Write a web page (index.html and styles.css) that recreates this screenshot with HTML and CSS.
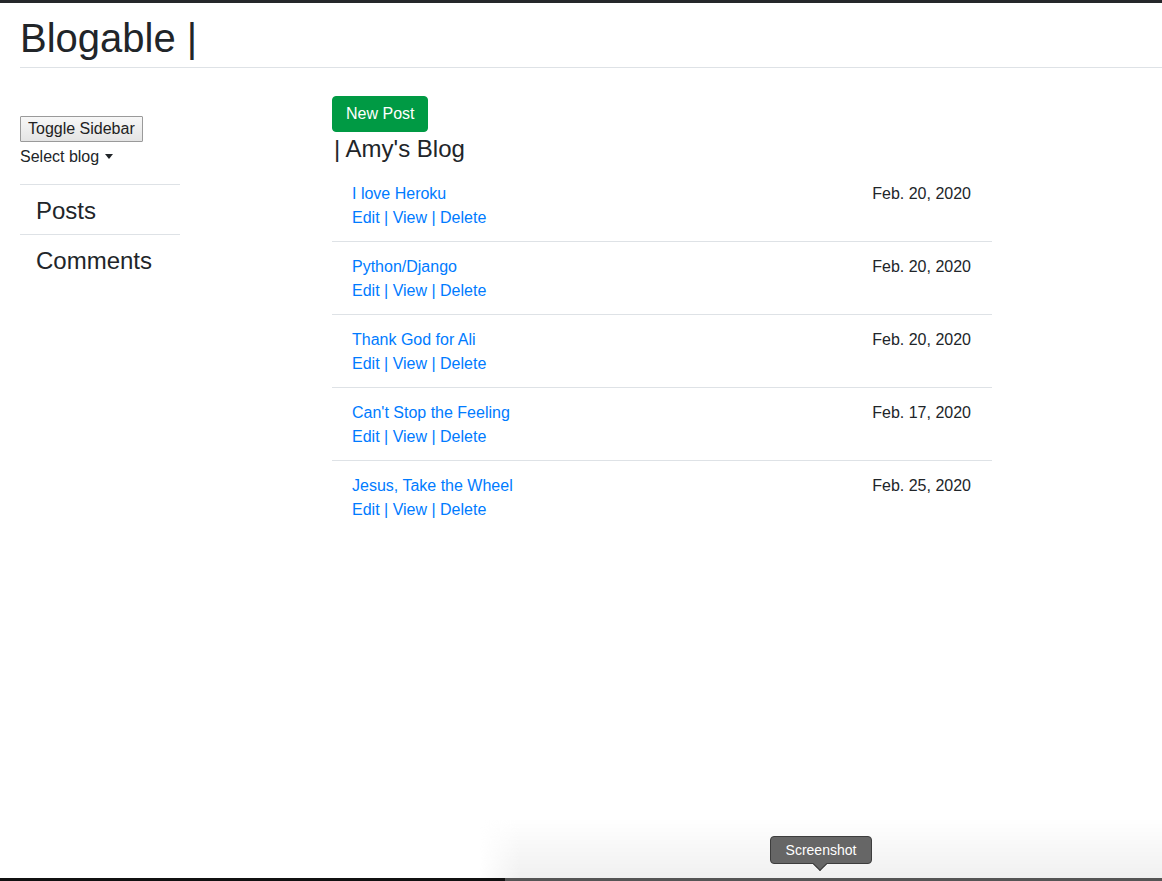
FILE: index.html
```html
<!DOCTYPE html>
<html lang="en">
<head>
<meta charset="utf-8">
<title>Blogable</title>
<link rel="stylesheet" href="styles.css">
</head>
<body>
<div class="topbar"></div>
<header class="site-header">
  <h1 class="brand">Blogable |</h1>
</header>
<div class="layout">
  <aside class="sidebar">
    <button class="toggle-btn" type="button">Toggle Sidebar</button>
    <div class="select-blog">Select blog <span class="caret"></span></div>
    <ul class="side-nav">
      <li class="side-item">Posts</li>
      <li class="side-item">Comments</li>
    </ul>
  </aside>
  <main class="main">
    <a class="btn-new" href="#">New Post</a>
    <h4 class="blog-title">| Amy's Blog</h4>
    <div class="posts">
      <div class="post-row">
        <div class="post-info">
          <a class="post-link" href="#">I love Heroku</a>
          <div class="post-actions"><a href="#">Edit</a> | <a href="#">View</a> | <a href="#">Delete</a></div>
        </div>
        <div class="post-date">Feb. 20, 2020</div>
      </div>
      <div class="post-row">
        <div class="post-info">
          <a class="post-link" href="#">Python/Django</a>
          <div class="post-actions"><a href="#">Edit</a> | <a href="#">View</a> | <a href="#">Delete</a></div>
        </div>
        <div class="post-date">Feb. 20, 2020</div>
      </div>
      <div class="post-row">
        <div class="post-info">
          <a class="post-link" href="#">Thank God for Ali</a>
          <div class="post-actions"><a href="#">Edit</a> | <a href="#">View</a> | <a href="#">Delete</a></div>
        </div>
        <div class="post-date">Feb. 20, 2020</div>
      </div>
      <div class="post-row">
        <div class="post-info">
          <a class="post-link" href="#">Can't Stop the Feeling</a>
          <div class="post-actions"><a href="#">Edit</a> | <a href="#">View</a> | <a href="#">Delete</a></div>
        </div>
        <div class="post-date">Feb. 17, 2020</div>
      </div>
      <div class="post-row">
        <div class="post-info">
          <a class="post-link" href="#">Jesus, Take the Wheel</a>
          <div class="post-actions"><a href="#">Edit</a> | <a href="#">View</a> | <a href="#">Delete</a></div>
        </div>
        <div class="post-date">Feb. 25, 2020</div>
      </div>
    </div>
  </main>
</div>
<div class="dock-shade"></div>
<div class="bottom-line"></div>
<div class="tooltip">Screenshot</div>
</body>
</html>
```
FILE: styles.css
```css
* { box-sizing: border-box; }
html, body { margin: 0; padding: 0; }
body {
  background: #fff;
  color: #212529;
  font-family: "Liberation Sans", Arial, Helvetica, sans-serif;
  font-size: 16px;
  line-height: 24px;
  min-height: 881px;
  overflow: hidden;
}
.topbar { height: 3px; background: #25272a; }
.site-header {
  margin-left: 20px;
  padding: 11px 0 5px;
  border-bottom: 1px solid #dee2e6;
}
.brand {
  margin: 0;
  font-size: 40px;
  line-height: 48px;
  font-weight: 500;
  color: #212529;
}
.layout {
  display: flex;
  padding-left: 20px;
}
.sidebar {
  width: 160px;
  margin-top: 48px;
  flex: none;
}
.toggle-btn {
  display: block;
  height: 26px;
  padding: 0 7px;
  font-family: "Liberation Sans", Arial, sans-serif;
  font-size: 16px;
  line-height: 24px;
  color: #222;
  background: linear-gradient(#f7f7f7, #e4e4e4);
  border: 1px solid #9a9a9a;
  border-radius: 1px;
  margin-left: 0;
}
.select-blog {
  margin-top: 3px;
  line-height: 24px;
  color: #212529;
}
.caret {
  display: inline-block;
  width: 0; height: 0;
  border-top: 5px solid #212529;
  border-left: 4px solid transparent;
  border-right: 4px solid transparent;
  vertical-align: 3px;
  margin-left: 1px;
}
.side-nav {
  list-style: none;
  margin: 15px 0 0;
  padding: 0;
}
.side-item {
  border-top: 1px solid #dee2e6;
  padding: 8px 0 5px 16px;
  font-size: 24px;
  line-height: 36px;
}
.main {
  width: 660px;
  margin-left: 152px;
  margin-top: 28px;
}
.btn-new {
  display: inline-block;
  height: 36px;
  padding: 5px 13px;
  border: 1px solid #009a44;
  border-radius: 4px;
  background: #009a44;
  color: #fff;
  text-decoration: none;
  font-size: 16px;
  line-height: 24px;
}
.blog-title {
  margin: 2px 0 0 2px;
  font-size: 24px;
  line-height: 29px;
  font-weight: 500;
  color: #212529;
}
.posts { margin-top: 6px; }
.post-row {
  display: flex;
  justify-content: space-between;
  padding: 13px 21px 11px 20px;
}
.post-row + .post-row { border-top: 1px solid #dee2e6; }
.post-info { display: flex; flex-direction: column; }
.post-link, .post-actions, .post-actions a {
  color: #007bff;
  text-decoration: none;
}
.post-date { color: #212529; }
.dock-shade {
  position: fixed;
  left: 480px; right: 0; bottom: 3px;
  height: 60px;
  background: linear-gradient(to bottom, rgba(242,242,242,0), #f0f0f0);
  -webkit-mask-image: linear-gradient(to right, transparent 0, #000 40px);
  mask-image: linear-gradient(to right, transparent 0, #000 40px);
}
.bottom-line {
  position: fixed;
  left: 0; right: 0; bottom: 0;
  height: 3px;
  background: linear-gradient(to right, #111 0, #111 505px, #555 505px, #555 100%);
}
.tooltip {
  position: fixed;
  left: 770px;
  top: 836px;
  width: 102px;
  height: 28px;
  background: #666;
  border: 1px solid #3d3d3d;
  border-radius: 4px;
  color: #fff;
  font-size: 14px;
  line-height: 26px;
  text-align: center;
}
.tooltip::after {
  content: "";
  position: absolute;
  left: 44px;
  bottom: -6px;
  width: 9px; height: 9px;
  background: #666;
  border-right: 1px solid #3d3d3d;
  border-bottom: 1px solid #3d3d3d;
  transform: rotate(45deg);
}
```
